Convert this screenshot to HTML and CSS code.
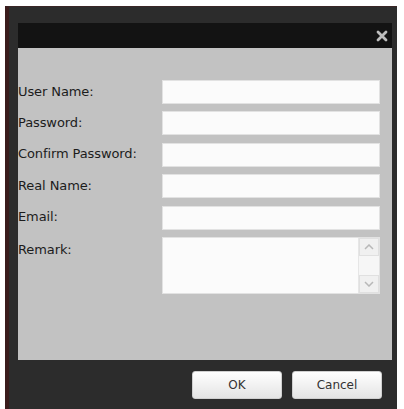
FILE: index.html
```html
<!DOCTYPE html>
<html>
<head>
<meta charset="utf-8">
<link rel="stylesheet" href="styles.css">
</head>
<body>
<div class="frame">
  <div class="titlebar">
    <svg class="close" width="12" height="12" viewBox="0 0 12 12"><path d="M2 2 L10 10 M10 2 L2 10" stroke="#bdbdbd" stroke-width="2.8" stroke-linecap="round"/></svg>
  </div>
  <div class="panel">
    <div class="row"><label>User Name:</label><div class="input"></div></div>
    <div class="row"><label>Password:</label><div class="input"></div></div>
    <div class="row"><label>Confirm Password:</label><div class="input"></div></div>
    <div class="row"><label>Real Name:</label><div class="input"></div></div>
    <div class="row"><label>Email:</label><div class="input"></div></div>
    <div class="row remark"><label>Remark:</label>
      <div class="input area">
        <div class="scroll">
          <div class="sbtn"><svg width="10" height="6" viewBox="0 0 10 6"><path d="M1 5 L5 1 L9 5" fill="none" stroke="#b8b8b8" stroke-width="1.5"/></svg></div>
          <div class="track"></div>
          <div class="sbtn"><svg width="10" height="6" viewBox="0 0 10 6"><path d="M1 1 L5 5 L9 1" fill="none" stroke="#b8b8b8" stroke-width="1.5"/></svg></div>
        </div>
      </div>
    </div>
  </div>
  <div class="footer">
    <button class="btn">OK</button>
    <button class="btn">Cancel</button>
  </div>
</div>
</body>
</html>
```
FILE: styles.css
```css
html, body { margin: 0; padding: 0; background: #ffffff; }
body { width: 404px; height: 409px; overflow: hidden; font-family: "DejaVu Sans", Verdana, sans-serif; }
.frame {
  margin: 6px 7px 0 5px;
  height: 403px;
  background: #2c2c2c;
  border-left: 4px solid #3a1c1c;
  border-top: 1px solid #3a2626;
  padding: 16px 5px 0 9px;
  box-sizing: border-box;
  display: flex;
  flex-direction: column;
}
.titlebar {
  height: 25px;
  background: #131313;
  display: flex;
  align-items: center;
  justify-content: flex-end;
  padding-right: 4px;
}
.close { display: block; }
.panel {
  height: 312px;
  background: #c2c2c2;
  padding-top: 32px;
  box-sizing: border-box;
  display: flex;
  flex-direction: column;
  gap: 7.4px;
}
.row { display: flex; align-items: center; height: 24px; }
.row label { width: 144px; font-size: 13px; color: #1c1c1c; margin-top: -2px; letter-spacing: -0.1px; white-space: nowrap; }
.input { width: 218px; height: 24px; background: #fbfbfb; box-sizing: border-box; border: 1px solid #e2e2e2; }
.row.remark { height: 57px; align-items: flex-start; }
.row.remark label { margin-top: 5px; }
.area { height: 57px; display: flex; justify-content: flex-end; }
.scroll { width: 20px; height: 100%; display: flex; flex-direction: column; background: #f6f6f6; border-left: 1px solid #e6e6e6; }
.sbtn { height: 18px; display: flex; align-items: center; justify-content: center; background: #f0f0f0; border: 1px solid #e0e0e0; box-sizing: border-box; }
.track { flex: 1; }
.footer { display: flex; justify-content: flex-end; gap: 10px; padding: 11px 10px 0 0; }
.btn {
  width: 90px; height: 28px;
  border: 1px solid #d0d0d0;
  border-radius: 3px;
  background: linear-gradient(#ffffff, #e4e4e4);
  font-family: "DejaVu Sans", Verdana, sans-serif;
  font-size: 12px;
  color: #333;
  padding: 0;
}
```
